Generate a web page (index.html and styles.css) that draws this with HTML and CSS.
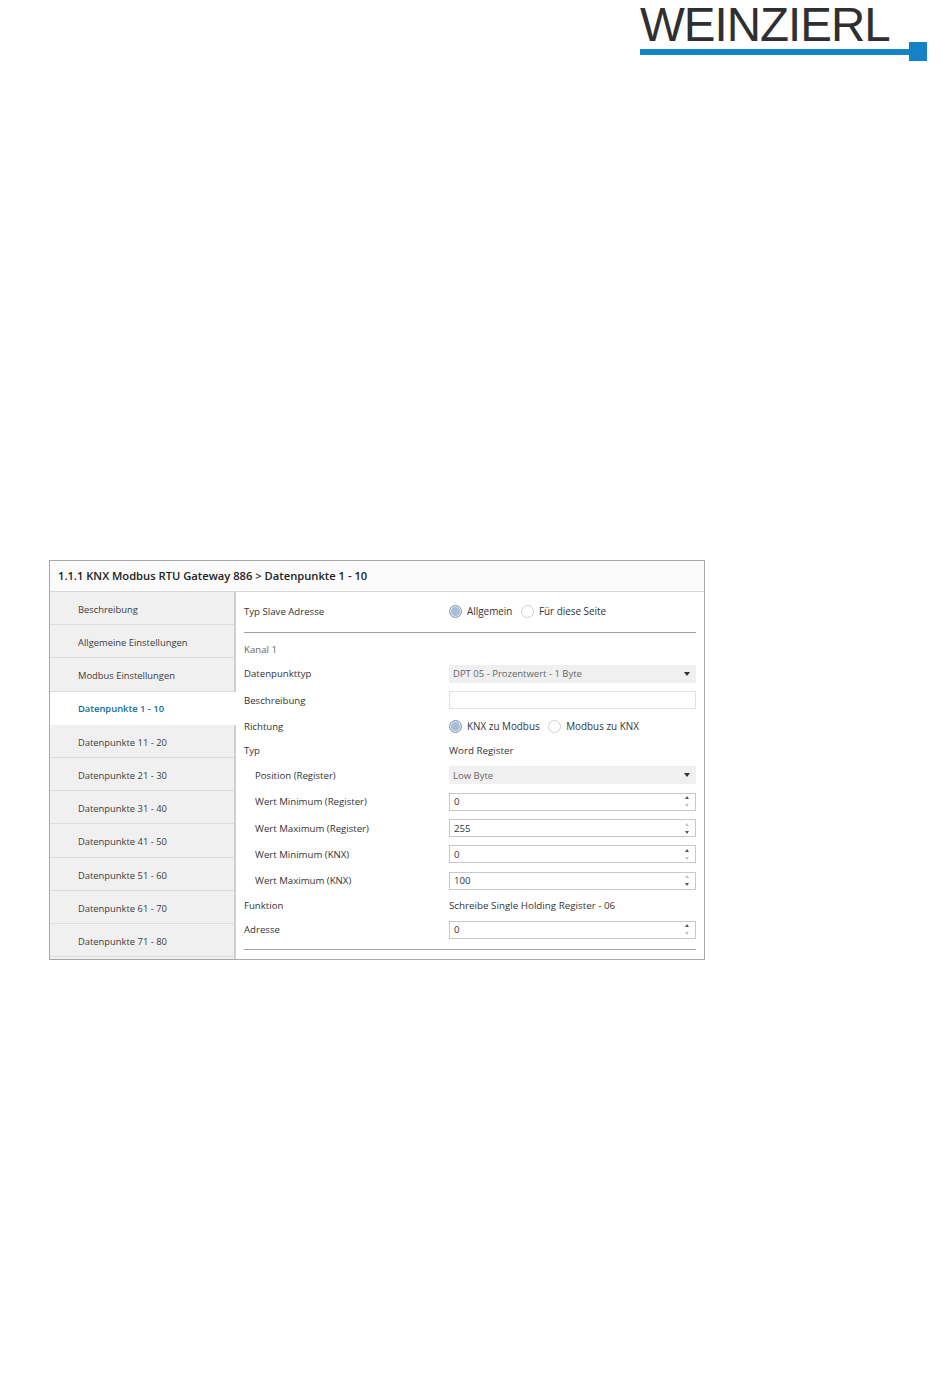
FILE: index.html
```html
<!DOCTYPE html>
<html lang="de">
<head>
<meta charset="utf-8">
<title>WEINZIERL</title>
<link rel="stylesheet" href="styles.css">
</head>
<body>
<header class="brand">
  <div class="logo">
    <div class="logo-word">WEINZIERL</div>
    <div class="logo-line"><span class="logo-bar"></span><span class="logo-square"></span></div>
  </div>
</header>
<section class="panel">
  <div class="panel-title">1.1.1 KNX Modbus RTU Gateway 886 &gt; Datenpunkte 1 - 10</div>
  <div class="panel-body">
    <nav class="side">
      <a class="side-item">Beschreibung</a>
      <a class="side-item">Allgemeine Einstellungen</a>
      <a class="side-item">Modbus Einstellungen</a>
      <a class="side-item active">Datenpunkte 1 - 10</a>
      <a class="side-item">Datenpunkte 11 - 20</a>
      <a class="side-item">Datenpunkte 21 - 30</a>
      <a class="side-item">Datenpunkte 31 - 40</a>
      <a class="side-item">Datenpunkte 41 - 50</a>
      <a class="side-item">Datenpunkte 51 - 60</a>
      <a class="side-item">Datenpunkte 61 - 70</a>
      <a class="side-item">Datenpunkte 71 - 80</a>
    </nav>
    <main class="form">
      <div class="row top-row">
        <div>Typ Slave Adresse</div>
        <div class="radios"><span class="radio checked"></span><span>Allgemein</span><span class="radio second"></span><span>Für diese Seite</span></div>
      </div>
      <hr class="rule">
      <div class="group-title">Kanal 1</div>
      <div class="rows">
        <div class="row">
          <div>Datenpunkttyp</div>
          <div class="select"><span>DPT 05 - Prozentwert - 1 Byte</span><span class="caret"></span></div>
        </div>
        <div class="row">
          <div>Beschreibung</div>
          <div class="input blank"></div>
        </div>
        <div class="row">
          <div>Richtung</div>
          <div class="radios"><span class="radio checked"></span><span>KNX zu Modbus</span><span class="radio second"></span><span>Modbus zu KNX</span></div>
        </div>
        <div class="row text">
          <div>Typ</div>
          <div class="value">Word Register</div>
        </div>
        <div class="row">
          <div class="sub">Position (Register)</div>
          <div class="select"><span>Low Byte</span><span class="caret"></span></div>
        </div>
        <div class="row">
          <div class="sub">Wert Minimum (Register)</div>
          <div class="input"><span>0</span><span class="spin"><i class="up dark"></i><i class="down"></i></span></div>
        </div>
        <div class="row">
          <div class="sub">Wert Maximum (Register)</div>
          <div class="input"><span>255</span><span class="spin"><i class="up"></i><i class="down dark"></i></span></div>
        </div>
        <div class="row">
          <div class="sub">Wert Minimum (KNX)</div>
          <div class="input"><span>0</span><span class="spin"><i class="up dark"></i><i class="down"></i></span></div>
        </div>
        <div class="row">
          <div class="sub">Wert Maximum (KNX)</div>
          <div class="input"><span>100</span><span class="spin"><i class="up"></i><i class="down dark"></i></span></div>
        </div>
        <div class="row text">
          <div>Funktion</div>
          <div class="value">Schreibe Single Holding Register - 06</div>
        </div>
        <div class="row">
          <div>Adresse</div>
          <div class="input"><span>0</span><span class="spin"><i class="up dark"></i><i class="down"></i></span></div>
        </div>
      </div>
      <hr class="rule last">
    </main>
  </div>
</section>
</body>
</html>
```

FILE: styles.css
```css
* { box-sizing: border-box; }
html, body { margin: 0; padding: 0; background: #fff; }
body {
  height: 1387px;
  overflow: hidden;
  font-family: "Open Sans", "Liberation Sans", sans-serif;
  font-size: 10px;
  color: #333;
}
.brand {
  display: flex;
  justify-content: flex-end;
  padding: 0 23px 0 0;
  height: 560px;
}
.logo { width: 287px; }
.logo-word {
  font-family: "Liberation Sans", Arial, sans-serif;
  font-size: 47.5px;
  line-height: 42px;
  height: 42px;
  margin-top: 4px;
  letter-spacing: -1px;
  color: #2f2f31;
  white-space: nowrap;
}
.logo-line { display: flex; align-items: center; height: 19px; margin-top: -4px; }
.logo-bar { flex: 1; height: 6px; background: #1582c8; }
.logo-square { width: 18px; height: 19px; background: #1582c8; }

.panel {
  margin-left: 49px;
  width: 656px;
  height: 400px;
  border: 1px solid #a8a8a8;
  overflow: hidden;
  background: #fff;
}
.panel-title {
  height: 31px;
  padding: 0 8px;
  line-height: 29px;
  font-size: 11.2px;
  font-weight: 600;
  color: #222;
  background: #fbfbfb;
  border-bottom: 1px solid #d8d8d8;
  white-space: nowrap;
}
.panel-body { display: flex; height: 367px; }
.side {
  width: 186px;
  flex: none;
  background: #f0f0f0;
  border-right: 2px solid #cfcfcf;
  display: flex;
  flex-direction: column;
  font-size: 9.4px;
}
.side-item {
  height: 33.2px;
  flex: none;
  padding-left: 28px;
  line-height: 35px;
  color: #3c3c3c;
  border-bottom: 1px solid #dcdcdc;
  white-space: nowrap;
}
.side-item.active {
  background: #fff;
  color: #0f6aa8;
  font-weight: 600;
  line-height: 33px;
  margin-right: -2px;
  position: relative;
  border-bottom-color: #fff;
}
.form { flex: 1; padding: 10px 8px 0; min-width: 0; font-size: 9.65px; }
.row {
  display: grid;
  grid-template-columns: 205px 1fr;
  align-items: center;
  height: 18px;
  white-space: nowrap;
}
.row.text { height: 14.5px; }
.rows { display: flex; flex-direction: column; gap: 8.3px; }
.rule { border: 0; border-top: 1px solid #a0a0a0; margin: 12px 0 0; height: 0; }
.rule.last { margin-top: 10.2px; }
.group-title { color: #666; height: 14px; line-height: 14px; margin: 10px 0 7.8px; }
.sub { padding-left: 11px; }
.value { font-size: 9.8px; }
.radios { display: flex; align-items: center; font-size: 9.9px; }
.radio {
  width: 13px;
  height: 13px;
  border-radius: 50%;
  border: 1px solid #d0d0d0;
  background: #fff;
  margin-right: 5px;
  flex: none;
}
.radio.checked {
  border-color: #8a9aae;
  background: #a9bcd8;
  box-shadow: inset 0 0 0 1px #e4ebf3;
}
.radio.second { margin-left: 8.5px; }
.select {
  display: flex;
  justify-content: space-between;
  align-items: center;
  height: 18px;
  padding: 0 6px 0 4px;
  background: #f0f0f0;
  color: #666;
  font-size: 9.5px;
}
.caret {
  width: 0;
  height: 0;
  border-left: 3.5px solid transparent;
  border-right: 3.5px solid transparent;
  border-top: 4px solid #333;
}
.input {
  display: flex;
  justify-content: space-between;
  align-items: center;
  height: 18px;
  padding: 0 6px 0 4px;
  background: #fff;
  border: 1px solid #c8c8c8;
  color: #333;
}
.input.blank { border-color: #e2e2e2; }
.spin { display: flex; flex-direction: column; gap: 5px; }
.spin i {
  display: block;
  width: 0;
  height: 0;
  border-left: 2.5px solid transparent;
  border-right: 2.5px solid transparent;
}
.spin .up { border-bottom: 3px solid #c4c4c4; }
.spin .down { border-top: 3px solid #c4c4c4; }
.spin .up.dark { border-bottom-color: #555; }
.spin .down.dark { border-top-color: #555; }
```
